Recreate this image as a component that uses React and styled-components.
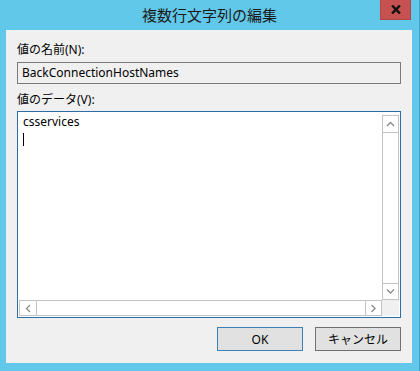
import React from 'react'
import styled, { createGlobalStyle } from 'styled-components'

const GlobalStyle = createGlobalStyle`
  html, body {
    margin: 0;
    padding: 0;
    background: #62c8ea;
  }
  body {
    font-family: "Noto Sans", "Noto Sans CJK JP", sans-serif;
    font-size: 12px;
    color: #000;
  }
`

const Window = styled.div`
  width: 420px;
  height: 371px;
  box-sizing: border-box;
  background: #62c8ea;
  border-right: 1px solid #3fa3c8;
  display: flex;
  flex-direction: column;
`

const TitleBar = styled.div`
  height: 30px;
  display: grid;
  grid-template-columns: 1fr auto 1fr;
  align-items: center;
`

const Title = styled.div`
  grid-column: 2;
  font-family: "Noto Sans CJK JP", sans-serif;
  font-size: 15px;
  line-height: 30px;
  color: #1a1a1a;
`

const CloseButton = styled.div`
  grid-column: 3;
  justify-self: end;
  align-self: start;
  margin-right: 8px;
  width: 31px;
  height: 20px;
  background: #c75050;
  box-sizing: border-box;
  border: 1px solid #b24545;
  border-top: none;
  display: flex;
  align-items: center;
  justify-content: center;
`

const Panel = styled.div`
  margin: 0 7px 8px 6px;
  height: 333px;
  box-sizing: border-box;
  background: #f0f0f0;
  padding: 12px 11px 12px 11px;
  display: flex;
  flex-direction: column;
`

const Label = styled.div`
  line-height: 16px;
  height: 16px;
  margin-top: ${p => p.$top || 0}px;
`

const NameBox = styled.div`
  margin-top: 4px;
  height: 22px;
  box-sizing: border-box;
  border: 1px solid #7a7a7a;
  background: #f0f0f0;
  padding-left: 4px;
  line-height: 20px;
`

const DataBox = styled.div`
  margin-top: 3px;
  height: 207px;
  box-sizing: border-box;
  border: 1px solid #2d6da3;
  background: #fff;
  padding: 1px 1px 1px 1px;
  display: grid;
  grid-template-columns: 1fr 17px;
  grid-template-rows: 1fr 16px;
`

const TextContent = styled.div`
  padding: 1px 0 0 4px;
  line-height: 16px;
`

const Caret = styled.div`
  width: 1px;
  height: 13px;
  margin-top: 3px;
  background: #000;
`

const VScroll = styled.div`
  margin-top: 2px;
  display: flex;
  flex-direction: column;
  box-sizing: border-box;
  border: 1px solid #c2c2c2;
  background: #fff;
`

const HScroll = styled.div`
  display: flex;
  box-sizing: border-box;
  border: 1px solid #c2c2c2;
  background: #fff;
`

const Arrow = styled.div`
  flex: 0 0 ${p => p.$size}px;
  display: flex;
  align-items: center;
  justify-content: center;
  border-color: #c2c2c2;
  border-style: solid;
  border-width: 0;
  ${p => p.$edge}: 1px solid #c2c2c2;
`

const Thumb = styled.div`
  flex: 1;
`

const Corner = styled.div`
  background: #f0f0f0;
`

const ButtonRow = styled.div`
  margin-top: 9px;
  display: flex;
  justify-content: flex-end;
  gap: 12px;
`

const Button = styled.div`
  width: 86px;
  height: 24px;
  box-sizing: border-box;
  border: 1px solid ${p => (p.$default ? '#3c7fb1' : '#707070')};
  background: #e1e1e1;
  display: flex;
  align-items: center;
  justify-content: center;
  font-family: "Noto Sans", "Noto Sans CJK JP", sans-serif;
  font-size: 12px;
`

const Chevron = ({ dir }) => {
  const paths = {
    up: 'M1 5 L4.5 1.5 L8 5',
    down: 'M1 1.5 L4.5 5 L8 1.5',
    left: 'M5 1 L1.5 4.5 L5 8',
    right: 'M1.5 1 L5 4.5 L1.5 8',
  }
  const vertical = dir === 'up' || dir === 'down'
  return (
    <svg width={vertical ? 9 : 7} height={vertical ? 7 : 9} viewBox={vertical ? '0 0 9 7' : '0 0 7 9'}>
      <path d={paths[dir]} fill="none" stroke="#8a8a8a" strokeWidth="1.3" />
    </svg>
  )
}

export default function App() {
  return (
    <>
      <GlobalStyle />
      <Window>
        <TitleBar>
          <Title>複数行文字列の編集</Title>
          <CloseButton>
            <svg width="10" height="9" viewBox="0 0 10 9">
              <path d="M1 0.5 L9 8.5 M9 0.5 L1 8.5" stroke="#111" strokeWidth="2.4" />
            </svg>
          </CloseButton>
        </TitleBar>
        <Panel>
          <Label>値の名前(N):</Label>
          <NameBox>BackConnectionHostNames</NameBox>
          <Label $top={8}>値のデータ(V):</Label>
          <DataBox>
            <TextContent>
              <div>csservices</div>
              <Caret />
            </TextContent>
            <VScroll>
              <Arrow $size={16} $edge="border-bottom"><Chevron dir="up" /></Arrow>
              <Thumb />
              <Arrow $size={15} $edge="border-top"><Chevron dir="down" /></Arrow>
            </VScroll>
            <HScroll>
              <Arrow $size={16} $edge="border-right"><Chevron dir="left" /></Arrow>
              <Thumb />
              <Arrow $size={15} $edge="border-left"><Chevron dir="right" /></Arrow>
            </HScroll>
            <Corner />
          </DataBox>
          <ButtonRow>
            <Button $default>OK</Button>
            <Button>キャンセル</Button>
          </ButtonRow>
        </Panel>
      </Window>
    </>
  )
}
